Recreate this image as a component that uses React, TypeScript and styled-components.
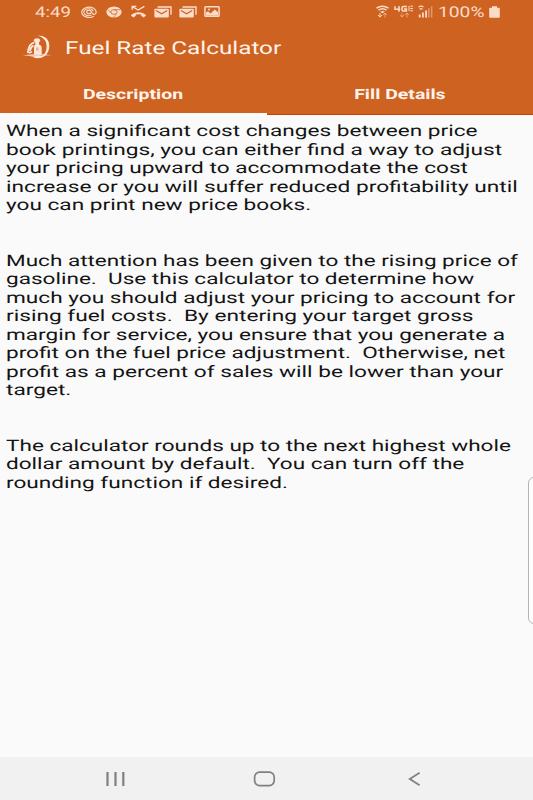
import React from "react";
import styled, { createGlobalStyle } from "styled-components";

const GlobalStyle = createGlobalStyle`
  * { box-sizing: border-box; }
  body { margin: 0; background: #fafafa; }
`;

const Screen = styled.div`
  display: flex;
  flex-direction: column;
  position: relative;
  width: 533px;
  height: 800px;
  overflow: hidden;
  background: #fafafa;
  font-family: Roboto, sans-serif;
  text-rendering: geometricPrecision;
`;

const WideText = styled.span<{ $stretch: number; $origin?: string }>`
  display: inline-block;
  white-space: pre;
  transform: scaleX(${(p) => p.$stretch});
  transform-origin: ${(p) => p.$origin ?? "left"} center;
`;

const Header = styled.header`
  height: 115px;
  flex: none;
  background: #ce6220;
  color: #fff3ec;
`;

const StatusBar = styled.div`
  display: flex;
  align-items: center;
  height: 23px;
  padding-left: 34.5px;
  color: #fbdccb;
  font-size: 14.8px;
  line-height: 23px;
`;

const Clock = styled.div`
  width: 42px;
  padding-top: 1px;
`;

const Notifications = styled.div`
  display: grid;
  grid-template-columns: repeat(6, 24.7px);
  justify-items: center;
  align-items: center;
  width: 299px;
  svg { display: block; }
`;

const Indicators = styled.div`
  display: flex;
  align-items: center;
  svg { display: block; flex: none; }
`;

const Network = styled.div`
  display: flex;
  gap: 5px;
  width: 62.5px;
`;

const Percent = styled.div`
  width: 50.5px;
  padding-top: 1px;
`;

const TitleBar = styled.div`
  display: flex;
  align-items: center;
  height: 50px;
  padding-left: 22px;
  gap: 13px;
  font-size: 17.8px;
  svg { margin-top: -3px; }
`;

const Title = styled.div`
  padding-top: 1px;
`;

const Tabs = styled.nav`
  display: grid;
  grid-template-columns: 1fr 1fr;
  height: 42px;
`;

const Tab = styled.div<{ $active?: boolean }>`
  display: flex;
  align-items: center;
  justify-content: center;
  font-size: 14px;
  font-weight: 700;
  border-bottom: ${(p) => (p.$active ? "2px solid #fffaf5" : "1px solid #c43e08")};
  padding-top: ${(p) => (p.$active ? "3px" : "2px")};
`;

const Body = styled.main`
  flex: 1;
  padding: 7px 0 0 6.4px;
  color: #141414;
  font-size: 15.8px;
  line-height: 18.52px;
`;

const Paragraph = styled.section`
  margin-bottom: 37.04px;
`;

const Line = styled.div`
  height: 18.52px;
`;

const EdgeHandle = styled.div`
  position: absolute;
  left: 528px;
  top: 477px;
  width: 14px;
  height: 147px;
  border: 1px solid #b5b5b5;
  border-radius: 6px;
  background: #fdfdfd;
`;

const NavBar = styled.footer`
  display: flex;
  align-items: center;
  flex: none;
  height: 43px;
  padding-left: 105px;
  background: #f1f1f1;
  svg { display: block; }
`;

const NavSlot = styled.div<{ $width: number }>`
  width: ${(p) => p.$width}px;
`;

const ink = "#fbdccb";

const paragraphs: [string, number][][] = [
  [
    ["When a significant cost changes between price", 472],
    ["book printings, you can either find a way to adjust", 495.5],
    ["your pricing upward to accommodate the cost", 462.5],
    ["increase or you will suffer reduced profitability until", 512],
    ["you can print new price books.", 305],
  ],
  [
    ["Much attention has been given to the rising price of", 512],
    ["gasoline.  Use this calculator to determine how", 468.5],
    ["much you should adjust your pricing to account for", 508.5],
    ["rising fuel costs.  By entering your target gross", 467],
    ["margin for service, you ensure that you generate a", 499],
    ["profit on the fuel price adjustment.  Otherwise, net", 499],
    ["profit as a percent of sales will be lower than your", 497.5],
    ["target.", 66],
  ],
  [
    ["The calculator rounds up to the next highest whole", 505.5],
    ["dollar amount by default.  You can turn off the", 458.5],
    ["rounding function if desired.", 282],
  ],
];

const SpiralIcon = () => (
  <svg width="16" height="12" viewBox="0 0 16 12" fill="none" stroke={ink}>
    <path d="M12.8 10.2A7.2 5.2 0 1 1 15.2 6C15.2 9 11.3 9.3 11.3 6.6" strokeWidth="1.2" />
    <path d="M10.5 9A4.8 3.5 0 1 1 12.3 5.4" strokeWidth="1.1" />
    <ellipse cx="8" cy="6" rx="2.3" ry="1.7" strokeWidth="1.2" />
  </svg>
);

const ChromeIcon = () => (
  <svg width="16" height="12" viewBox="0 0 16 12">
    <ellipse cx="8" cy="6" rx="7.6" ry="5.6" fill={ink} />
    <ellipse cx="8" cy="6" rx="3.2" ry="2.3" fill={ink} stroke="#ce6220" strokeWidth=".8" />
    <path d="M8 3.7H14.8M5.3 7.3L1.5 3M10.7 7.3L7.6 11.6" stroke="#ce6220" strokeWidth=".7" />
  </svg>
);

const MissedIcon = () => (
  <svg width="17" height="13" viewBox="0 0 17 13" fill="none" stroke={ink}>
    <path d="M2.2 4.8V1.4H6.3M2.4 1.6L8.1 5L14.4 1.3" strokeWidth="1.4" />
    <path d="M.8 10.6L3.5 12.4L5.8 10.8V9.6Q8.5 8.8 11.2 9.6V10.8L13.5 12.4L16.2 10.6Q14 7.4 8.5 7.2Q3 7.4 .8 10.6Z" fill={ink} stroke="none" />
  </svg>
);

const MailIcon = () => (
  <svg width="18" height="12" viewBox="0 0 18 12" fill="none">
    <path d="M3.5 1H17V8.8" stroke={ink} strokeWidth="1.4" />
    <rect x=".4" y="2.8" width="14.4" height="8.8" rx="1" fill={ink} />
    <path d="M2 4.5L7.6 7.8L13.2 4.5" stroke="#ce6220" strokeWidth="1.2" />
  </svg>
);

const ImageIcon = () => (
  <svg width="16" height="11" viewBox="0 0 16 11">
    <rect x=".9" y=".8" width="14.2" height="9.4" rx=".8" fill="none" stroke={ink} strokeWidth="1.5" />
    <path d="M2 8V6.5L4 5.2L6.6 7.6L10.8 3.5L14 6.2V9.5H2Z" fill={ink} />
    <circle cx="5" cy="3.4" r="1" fill={ink} />
  </svg>
);

const WifiIcon = () => (
  <svg width="13" height="13" viewBox="0 0 13 13" fill="none" stroke={ink}>
    <path d="M.5 3.2Q6.5-.8 12.5 3.2M2.5 5.1Q6.5 2.3 10.5 5.1" strokeWidth="1.5" />
    <path d="M4.2 6.7Q6.5 5.4 8.8 6.7L6.5 8.2Z" fill={ink} stroke="none" />
    <path d="M4 8V12M2 10L4 12.2L6 10" strokeWidth="1" />
    <path d="M9 12.5V8M7 10.2L9 8L11 10.2" strokeWidth="1" opacity=".55" />
  </svg>
);

const LteIcon = () => (
  <svg width="19" height="13" viewBox="0 0 19 13" fill="none" stroke={ink}>
    <path d="M1 1.2V4.2H6.2M5 1V6.8M13 1.6H9.2Q8 1.6 8 2.8V4.8Q8 6.1 9.2 6.1H12.4V4H10" strokeWidth="1.5" />
    <path d="M15 1V6M16.3 1.2H19M16.3 3.5H19M16.3 5.8H19" strokeWidth="1" />
    <path d="M8 8V12M6 10L8 12.2L10 10M13 12.5V8M11 10.2L13 8L15 10.2" strokeWidth="1" opacity=".5" />
  </svg>
);

const SignalIcon = () => (
  <svg width="15" height="13" viewBox="0 0 15 13" fill={ink}>
    <path d="M.5 2.1Q3 .2 5.5 2.1M1.5 4.2Q3 3 4.5 4.2" fill="none" stroke={ink} strokeWidth="1.1" />
    <path d="M.8 9.5H2.6V12.4H.8ZM4 7.5H5.8V12.4H4ZM7.2 5.4H9V12.4H7.2Z" />
    <path d="M10.1 3.2H11.6V12.4H10.1ZM12.9 1.2H14.4V12.4H12.9Z" opacity=".45" />
  </svg>
);

const BatteryIcon = () => (
  <svg width="11" height="12" viewBox="0 0 11 12" fill={ink}>
    <path d="M3 .3H8V1.8H10Q10.8 1.8 10.8 2.6V11Q10.8 11.8 10 11.8H1Q.2 11.8 .2 11V2.6Q.2 1.8 1 1.8H3Z" />
  </svg>
);

const FuelLogo = () => (
  <svg width="30" height="24" viewBox="0 0 30 24" fill="#ffe9dd">
    <path d="M15.4.6C24 .8 27.5 5 27.3 11.5C27 18 23 22.5 17 23.2C22 20.5 24.6 17 24.6 11.5C24.6 6 22 2.6 15.4.6Z" />
    <path d="M.2 20.5Q14 17.5 29.8 20.2Q16 20.5 12 22Q7 20.2 .2 20.5Z" opacity=".8" />
    <path d="M11 22Q14 20.3 21 21Q19 23.2 15.5 23.3Q12.5 23.2 11 22Z" />
    <path d="M11.6 5.4Q12 3.2 15 3.2Q18 3.2 18.4 5.4L17 7.4V9.5Q19.4 10 19.7 12.5V19.5H12V12.5Q12 10 13.4 9.5V7.4Z" />
    <path d="M12.5 7.4Q7 8.6 5.8 17Q8.2 18.5 10 16.5M8 16Q8 12.5 11.5 10.5" fill="none" stroke="#ffe9dd" strokeWidth="1.7" />
    <path d="M14 12.5H16.5V15.5H14Z" fill="#ce6220" opacity=".4" />
  </svg>
);

function StretchedLine({ text, width }: { text: string; width: number }) {
  const ref = React.useRef<HTMLSpanElement>(null);
  const [stretch, setStretch] = React.useState(1.35);
  React.useLayoutEffect(() => {
    if (ref.current) setStretch(width / ref.current.offsetWidth);
  }, [width]);
  return (
    <Line>
      <WideText ref={ref} $stretch={stretch}>{text}</WideText>
    </Line>
  );
}

export default function App() {
  return (
    <Screen>
      <GlobalStyle />
      <Header>
        <StatusBar>
          <Clock><WideText $stretch={1.26}>4:49</WideText></Clock>
          <Notifications>
            <SpiralIcon />
            <ChromeIcon />
            <MissedIcon />
            <MailIcon />
            <MailIcon />
            <ImageIcon />
          </Notifications>
          <Indicators>
            <Network>
              <WifiIcon />
              <LteIcon />
              <SignalIcon />
            </Network>
            <Percent><WideText $stretch={1.3}>100%</WideText></Percent>
            <BatteryIcon />
          </Indicators>
        </StatusBar>
        <TitleBar>
          <FuelLogo />
          <Title><WideText $stretch={1.365}>Fuel Rate Calculator</WideText></Title>
        </TitleBar>
        <Tabs>
          <Tab $active><WideText $stretch={1.39} $origin="center">Description</WideText></Tab>
          <Tab><WideText $stretch={1.39} $origin="center">Fill Details</WideText></Tab>
        </Tabs>
      </Header>
      <Body>
        {paragraphs.map((lines, i) => (
          <Paragraph key={i}>
            {lines.map(([text, width]) => (
              <StretchedLine key={text} text={text} width={width} />
            ))}
          </Paragraph>
        ))}
      </Body>
      <EdgeHandle />
      <NavBar>
        <NavSlot $width={148}>
          <svg width="21" height="14" viewBox="0 0 21 14" stroke="#808080" strokeWidth="2.2">
            <path d="M2.5 0V14M10.5 0V14M18.3 0V14" />
          </svg>
        </NavSlot>
        <NavSlot $width={155}>
          <svg width="23" height="16" viewBox="0 0 23 16" fill="none" stroke="#808080" strokeWidth="1.7">
            <rect x="1.6" y="1.2" width="19.6" height="13.4" rx="5" />
          </svg>
        </NavSlot>
        <svg width="13" height="14" viewBox="0 0 13 14" fill="none" stroke="#808080" strokeWidth="1.8">
          <path d="M11.6 .8L1.8 7L11.6 13.2" />
        </svg>
      </NavBar>
    </Screen>
  );
}
